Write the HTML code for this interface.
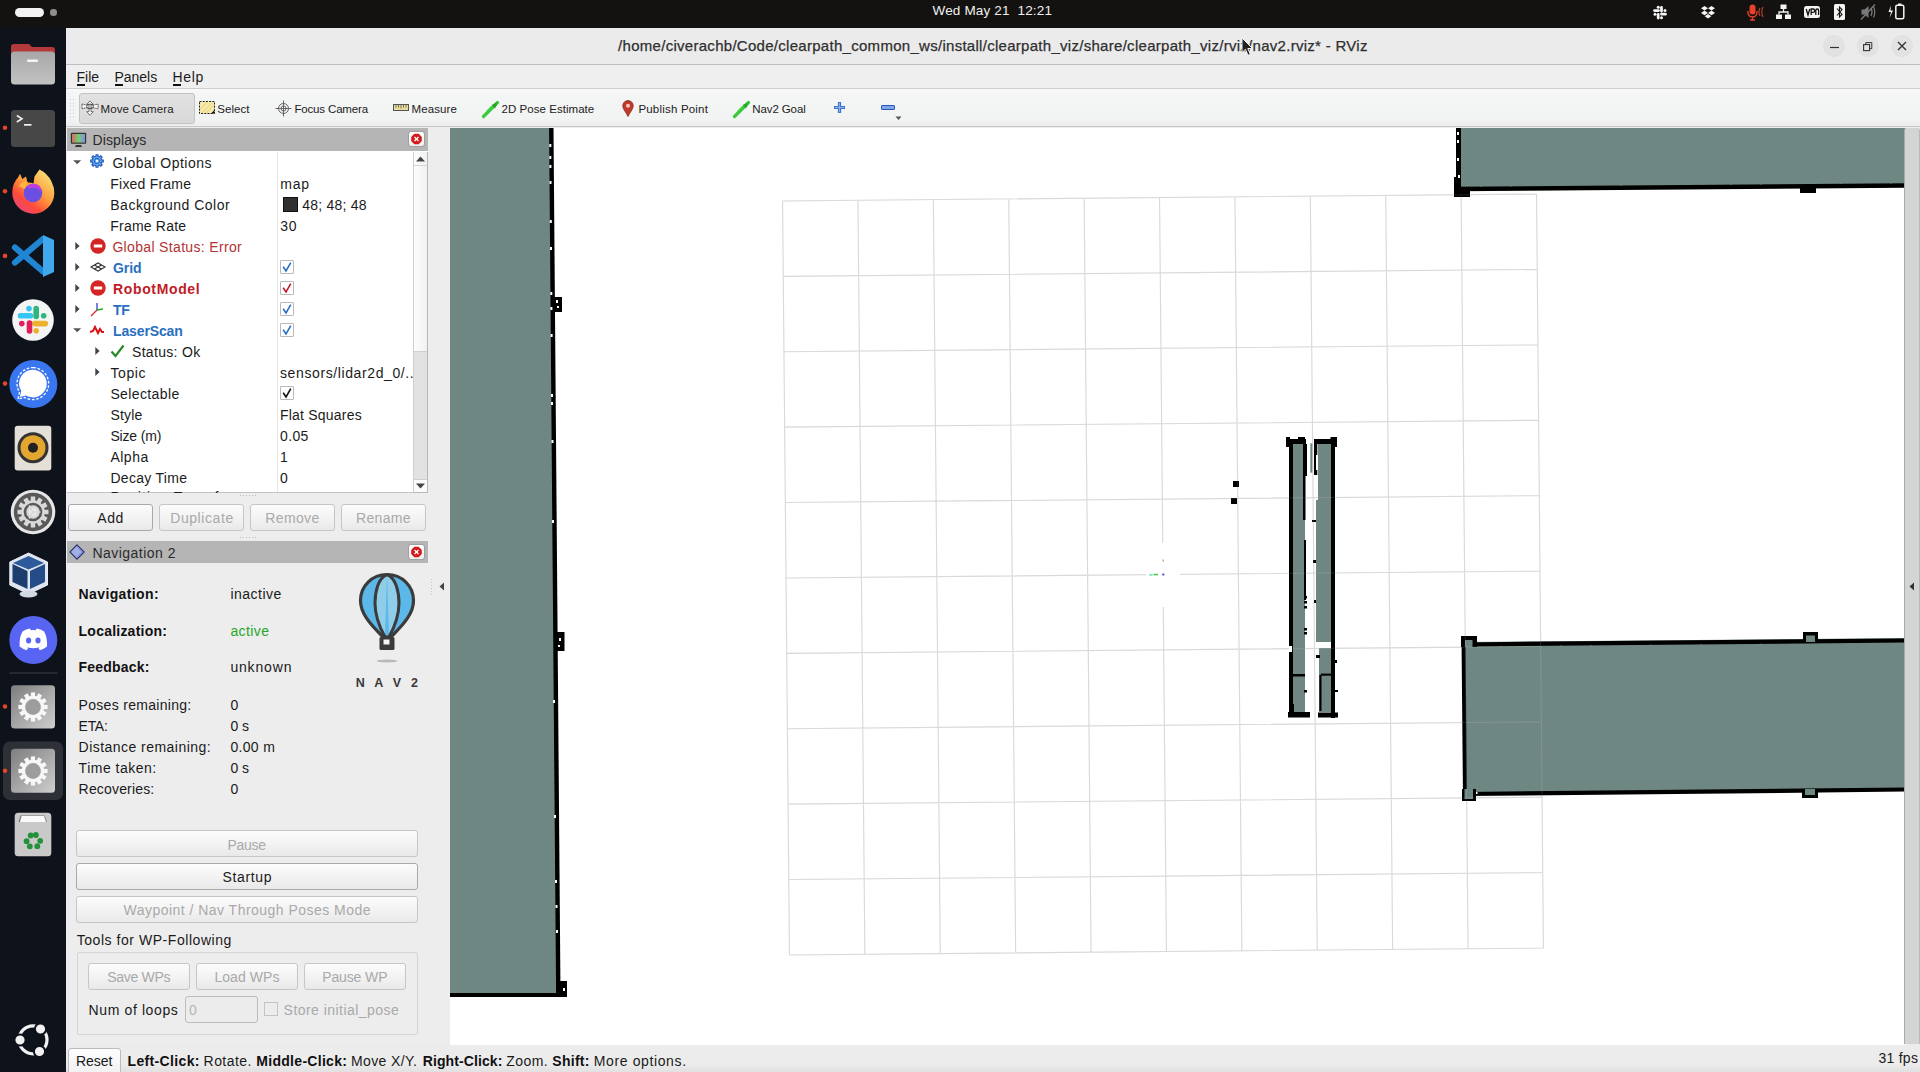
<!DOCTYPE html><html><head><meta charset="utf-8"><style>
html,body{margin:0;padding:0;}
body{width:1920px;height:1072px;overflow:hidden;position:relative;background:#ededed;font-family:"Liberation Sans",sans-serif;}
.t{position:absolute;white-space:pre;}
.b{position:absolute;box-sizing:border-box;}
svg{position:absolute;overflow:visible;}
</style></head><body>
<div class="b" style="left:0px;top:0px;width:1920px;height:28px;background:#131210;"></div>
<div class="b" style="left:15px;top:8px;width:29px;height:8.5px;background:#f2f2f2;border-radius:4.5px;"></div>
<div class="b" style="left:50px;top:9px;width:6.5px;height:6.5px;background:#8e8e8e;border-radius:50%;"></div>
<div class="t" style="left:932.50px;top:3.37px;font-size:13.5px;line-height:15.51px;color:#f0f0f0;letter-spacing:0.164px;">Wed May 21  12:21</div>
<div class="b" style="left:0px;top:28px;width:66px;height:1044px;background:#0e121b;"></div>
<div class="b" style="left:66px;top:28px;width:1854px;height:36px;background:#ebebeb;"></div>
<div class="b" style="left:66px;top:64px;width:1854px;height:1px;background:#bfbfbf;"></div>
<div class="b" style="left:66px;top:65px;width:1854px;height:24px;background:#efefef;"></div>
<div class="b" style="left:66px;top:88px;width:1854px;height:1px;background:#cdcdcd;"></div>
<div class="b" style="left:66px;top:89px;width:1854px;height:38px;background:linear-gradient(#f9f9f9 0px,#f4f5f5 6px,#f2f3f3 30px,#ececec 37px);"></div>
<div class="b" style="left:66px;top:126px;width:1854px;height:1px;background:#c8c8c8;"></div>
<div class="t" style="left:618.10px;top:36.78px;font-size:15px;line-height:17.23px;color:#2f2f2f;letter-spacing:0.284px;-webkit-text-stroke:0.25px #2f2f2f;">/home/civerachb/Code/clearpath_common_ws/install/clearpath_viz/share/clearpath_viz/rviz/nav2.rviz* - RViz</div>
<div class="b" style="left:1823px;top:35px;width:22px;height:22px;background:#e2e2e2;border-radius:50%;"></div>
<div class="b" style="left:1856.5px;top:35px;width:22px;height:22px;background:#e2e2e2;border-radius:50%;"></div>
<div class="b" style="left:1891px;top:35px;width:22px;height:22px;background:#e2e2e2;border-radius:50%;"></div>
<div class="t" style="left:76.60px;top:69.11px;font-size:14px;line-height:16.09px;color:#1b1b1b;letter-spacing:-0.049px;">File</div>
<div class="t" style="left:114.40px;top:69.11px;font-size:14px;line-height:16.09px;color:#1b1b1b;letter-spacing:0.001px;">Panels</div>
<div class="t" style="left:172.50px;top:69.11px;font-size:14px;line-height:16.09px;color:#1b1b1b;letter-spacing:0.673px;">Help</div>
<div class="b" style="left:77px;top:84px;width:7.5px;height:2px;background:#111;"></div>
<div class="b" style="left:114.5px;top:84px;width:8.5px;height:2px;background:#111;"></div>
<div class="b" style="left:172.5px;top:84px;width:8.5px;height:2px;background:#111;"></div>
<div class="b" style="left:66px;top:127px;width:384px;height:917px;background:#ededed;"></div>
<div class="b" style="left:67px;top:128px;width:361px;height:23px;background:#b5b5b5;"></div>
<div class="t" style="left:92.50px;top:132.11px;font-size:14px;line-height:16.09px;color:#2a2a2a;letter-spacing:0.130px;">Displays</div>
<div class="b" style="left:67px;top:151px;width:361px;height:342px;background:#ffffff;border-bottom:1px solid #c4c4c4;"></div>
<div class="b" style="left:277px;top:152px;width:1px;height:340px;background:#e6e6e6;"></div>
<div class="b" style="left:413px;top:152px;width:15px;height:341px;background:#e2e2e2;border-left:1px solid #cfcfcf;border-right:1px solid #b8b8b8;border-bottom:1px solid #b8b8b8;"></div>
<div class="b" style="left:414px;top:152px;width:13px;height:200px;background:linear-gradient(90deg,#fdfdfd,#f1f1f1);border-bottom:1px solid #d0d0d0;"></div>
<div class="b" style="left:414px;top:165px;width:13px;height:1px;background:#d6d6d6;"></div>
<div class="b" style="left:414px;top:479px;width:13px;height:1px;background:#d0d0d0;"></div>
<div class="b" style="left:414px;top:480px;width:13px;height:12px;background:#fbfbfb;"></div>
<svg style="left:73px;top:159.5px" width="10" height="6"><path d="M0.2 0.3 L8.2 0.3 L4.2 4.3 Z" fill="#555"/></svg>
<svg style="left:90.4px;top:154.4px" width="14" height="14"><path d="M11.56 5.86 L13.32 6.00 L13.32 8.00 L11.56 8.14 L11.03 9.42 L12.18 10.76 L10.76 12.18 L9.42 11.03 L8.14 11.56 L8.00 13.32 L6.00 13.32 L5.86 11.56 L4.58 11.03 L3.24 12.18 L1.82 10.76 L2.97 9.42 L2.44 8.14 L0.68 8.00 L0.68 6.00 L2.44 5.86 L2.97 4.58 L1.82 3.24 L3.24 1.82 L4.58 2.97 L5.86 2.44 L6.00 0.68 L8.00 0.68 L8.14 2.44 L9.42 2.97 L10.76 1.82 L12.18 3.24 L11.03 4.58 Z" fill="#5fa8e6" stroke="#2458c0" stroke-width="1.1"/><circle cx="7" cy="7" r="2.6" fill="none" stroke="#2458c0" stroke-width="0.9"/><circle cx="7" cy="7" r="1.3" fill="#e8f4ff"/></svg>
<div class="t" style="left:112.40px;top:155.01px;font-size:14px;line-height:16.09px;color:#1b1b1b;letter-spacing:0.502px;">Global Options</div>
<div class="t" style="left:110.30px;top:176.01px;font-size:14px;line-height:16.09px;color:#1b1b1b;letter-spacing:0.217px;">Fixed Frame</div>
<div class="t" style="left:280.30px;top:176.01px;font-size:14px;line-height:16.09px;color:#1b1b1b;letter-spacing:0.741px;">map</div>
<div class="t" style="left:110.30px;top:197.01px;font-size:14px;line-height:16.09px;color:#1b1b1b;letter-spacing:0.486px;">Background Color</div>
<div class="b" style="left:283px;top:197px;width:15px;height:15px;background:#303030;border:1px solid #111;"></div>
<div class="t" style="left:302.30px;top:197.01px;font-size:14px;line-height:16.09px;color:#1b1b1b;letter-spacing:0.206px;">48; 48; 48</div>
<div class="t" style="left:110.30px;top:218.01px;font-size:14px;line-height:16.09px;color:#1b1b1b;letter-spacing:0.203px;">Frame Rate</div>
<div class="t" style="left:280.30px;top:218.01px;font-size:14px;line-height:16.09px;color:#1b1b1b;letter-spacing:0.637px;">30</div>
<svg style="left:75px;top:241px" width="6" height="10"><path d="M0.3 1 L4.6 5 L0.3 9 Z" fill="#444"/></svg>
<svg style="left:89.5px;top:238px" width="16" height="16"><circle cx="8" cy="8" r="7.7" fill="#d42424"/><rect x="3.8" y="6.4" width="8.4" height="3.2" rx="0.4" fill="#fff"/></svg>
<div class="t" style="left:112.40px;top:239.01px;font-size:14px;line-height:16.09px;color:#b43232;letter-spacing:0.337px;">Global Status: Error</div>
<svg style="left:75px;top:262px" width="6" height="10"><path d="M0.3 1 L4.6 5 L0.3 9 Z" fill="#444"/></svg>
<svg style="left:90px;top:261px" width="16" height="12"><g fill="none" stroke="#333" stroke-width="1.1"><path d="M1 6 L8 2 L15 6 L8 10 Z"/><path d="M4.5 4 L11.5 8 M11.5 4 L4.5 8"/></g></svg>
<div class="t" style="left:113.00px;top:260.01px;font-size:14px;line-height:16.09px;color:#2a6fbf;font-weight:bold;letter-spacing:-0.094px;">Grid</div>
<div class="b" style="left:280px;top:260px;width:14px;height:14px;background:#fff;border:1px solid #b9b9b9;border-radius:1px;"></div>
<svg style="left:280px;top:260px" width="14" height="14"><path d="M3.2 6.8 L6 11 L10.8 2.6" stroke="#2a6fbf" stroke-width="1.6" fill="none" stroke-linejoin="miter"/></svg>
<svg style="left:75px;top:283px" width="6" height="10"><path d="M0.3 1 L4.6 5 L0.3 9 Z" fill="#444"/></svg>
<svg style="left:89.5px;top:280px" width="16" height="16"><circle cx="8" cy="8" r="7.7" fill="#d42424"/><rect x="3.8" y="6.4" width="8.4" height="3.2" rx="0.4" fill="#fff"/></svg>
<div class="t" style="left:113.00px;top:281.01px;font-size:14px;line-height:16.09px;color:#c01c28;font-weight:bold;letter-spacing:0.641px;">RobotModel</div>
<div class="b" style="left:280px;top:281px;width:14px;height:14px;background:#fff;border:1px solid #b9b9b9;border-radius:1px;"></div>
<svg style="left:280px;top:281px" width="14" height="14"><path d="M3.2 6.8 L6 11 L10.8 2.6" stroke="#c01c28" stroke-width="1.6" fill="none" stroke-linejoin="miter"/></svg>
<svg style="left:75px;top:304px" width="6" height="10"><path d="M0.3 1 L4.6 5 L0.3 9 Z" fill="#444"/></svg>
<svg style="left:89px;top:301px" width="16" height="16"><path d="M8 9 L8 2" stroke="#2244cc" stroke-width="1.3"/><path d="M8 9 L14 8" stroke="#22aa22" stroke-width="1.3"/><path d="M8 9 L2 15" stroke="#dd2222" stroke-width="1.3"/></svg>
<div class="t" style="left:113.00px;top:302.01px;font-size:14px;line-height:16.09px;color:#2a6fbf;font-weight:bold;letter-spacing:-0.294px;">TF</div>
<div class="b" style="left:280px;top:302px;width:14px;height:14px;background:#fff;border:1px solid #b9b9b9;border-radius:1px;"></div>
<svg style="left:280px;top:302px" width="14" height="14"><path d="M3.2 6.8 L6 11 L10.8 2.6" stroke="#2a6fbf" stroke-width="1.6" fill="none" stroke-linejoin="miter"/></svg>
<svg style="left:73px;top:327.5px" width="10" height="6"><path d="M0.2 0.3 L8.2 0.3 L4.2 4.3 Z" fill="#555"/></svg>
<svg style="left:89px;top:323px" width="16" height="14"><path d="M1 9 L4 8 L6 4 L9 10 L11 6 L13 9 L15 9" stroke="#dd1111" stroke-width="2" fill="none"/></svg>
<div class="t" style="left:113.00px;top:323.01px;font-size:14px;line-height:16.09px;color:#2a6fbf;font-weight:bold;letter-spacing:-0.125px;">LaserScan</div>
<div class="b" style="left:280px;top:323px;width:14px;height:14px;background:#fff;border:1px solid #b9b9b9;border-radius:1px;"></div>
<svg style="left:280px;top:323px" width="14" height="14"><path d="M3.2 6.8 L6 11 L10.8 2.6" stroke="#2a6fbf" stroke-width="1.6" fill="none" stroke-linejoin="miter"/></svg>
<svg style="left:95px;top:346px" width="6" height="10"><path d="M0.3 1 L4.6 5 L0.3 9 Z" fill="#444"/></svg>
<svg style="left:110px;top:344px" width="15" height="14"><path d="M1.5 7.5 L5.5 12 L13.5 1.5" stroke="#2a8a2a" stroke-width="2.2" fill="none"/></svg>
<div class="t" style="left:132.00px;top:344.01px;font-size:14px;line-height:16.09px;color:#1b1b1b;letter-spacing:0.316px;">Status: Ok</div>
<svg style="left:95px;top:367px" width="6" height="10"><path d="M0.3 1 L4.6 5 L0.3 9 Z" fill="#444"/></svg>
<div class="t" style="left:110.40px;top:365.01px;font-size:14px;line-height:16.09px;color:#1b1b1b;letter-spacing:0.632px;">Topic</div>
<div class="t" style="left:280.00px;top:365.01px;font-size:14px;line-height:16.09px;color:#1b1b1b;letter-spacing:0.609px;">sensors/lidar2d_0/..</div>
<div class="t" style="left:110.40px;top:386.01px;font-size:14px;line-height:16.09px;color:#1b1b1b;letter-spacing:0.382px;">Selectable</div>
<div class="b" style="left:280px;top:386px;width:14px;height:14px;background:#fff;border:1px solid #b9b9b9;border-radius:1px;"></div>
<svg style="left:280px;top:386px" width="14" height="14"><path d="M3.2 6.8 L6 11 L10.8 2.6" stroke="#111" stroke-width="1.6" fill="none" stroke-linejoin="miter"/></svg>
<div class="t" style="left:110.40px;top:407.01px;font-size:14px;line-height:16.09px;color:#1b1b1b;letter-spacing:0.194px;">Style</div>
<div class="t" style="left:280.00px;top:407.01px;font-size:14px;line-height:16.09px;color:#1b1b1b;letter-spacing:0.205px;">Flat Squares</div>
<div class="t" style="left:110.40px;top:428.01px;font-size:14px;line-height:16.09px;color:#1b1b1b;letter-spacing:-0.156px;">Size (m)</div>
<div class="t" style="left:280.00px;top:428.01px;font-size:14px;line-height:16.09px;color:#1b1b1b;letter-spacing:0.355px;">0.05</div>
<div class="t" style="left:110.40px;top:449.01px;font-size:14px;line-height:16.09px;color:#1b1b1b;letter-spacing:0.501px;">Alpha</div>
<div class="t" style="left:280.00px;top:449.01px;font-size:14px;line-height:16.09px;color:#1b1b1b;">1</div>
<div class="t" style="left:110.40px;top:470.01px;font-size:14px;line-height:16.09px;color:#1b1b1b;letter-spacing:0.301px;">Decay Time</div>
<div class="t" style="left:280.00px;top:470.01px;font-size:14px;line-height:16.09px;color:#1b1b1b;">0</div>
<div class="b" style="left:67px;top:488px;width:346px;height:5px;overflow:hidden;"><div class="t" style="left:43.40px;top:1.41px;font-size:14px;line-height:16.09px;color:#1b1b1b;letter-spacing:1.100px;">Position Transformer</div>
</div>
<div class="b" style="left:68px;top:504px;width:85px;height:27px;background:linear-gradient(#fcfcfc,#f3f3f3 50%,#e9e9e9);border:1px solid #a9a9a9;border-radius:3px;"></div>
<div class="t" style="left:97.20px;top:509.71px;font-size:14px;line-height:16.09px;color:#1b1b1b;letter-spacing:0.647px;">Add</div>
<div class="b" style="left:159px;top:504px;width:85px;height:27px;background:linear-gradient(#fcfcfc,#f3f3f3 50%,#e9e9e9);border:1px solid #c6c6c6;border-radius:3px;"></div>
<div class="t" style="left:170.20px;top:509.71px;font-size:14px;line-height:16.09px;color:#a9a9a9;letter-spacing:0.582px;">Duplicate</div>
<div class="b" style="left:250px;top:504px;width:85px;height:27px;background:linear-gradient(#fcfcfc,#f3f3f3 50%,#e9e9e9);border:1px solid #c6c6c6;border-radius:3px;"></div>
<div class="t" style="left:265.30px;top:509.71px;font-size:14px;line-height:16.09px;color:#a9a9a9;letter-spacing:0.358px;">Remove</div>
<div class="b" style="left:341px;top:504px;width:85px;height:27px;background:linear-gradient(#fcfcfc,#f3f3f3 50%,#e9e9e9);border:1px solid #c6c6c6;border-radius:3px;"></div>
<div class="t" style="left:356.00px;top:509.71px;font-size:14px;line-height:16.09px;color:#a9a9a9;letter-spacing:0.322px;">Rename</div>
<svg style="left:240px;top:494px" width="20" height="4"><g fill="#bbb"><rect x="0" y="1" width="1" height="1"/><rect x="3" y="1" width="1" height="1"/><rect x="6" y="1" width="1" height="1"/><rect x="9" y="1" width="1" height="1"/><rect x="12" y="1" width="1" height="1"/><rect x="15" y="1" width="1" height="1"/></g></svg>
<svg style="left:240px;top:536px" width="20" height="4"><g fill="#bbb"><rect x="0" y="1" width="1" height="1"/><rect x="3" y="1" width="1" height="1"/><rect x="6" y="1" width="1" height="1"/><rect x="9" y="1" width="1" height="1"/><rect x="12" y="1" width="1" height="1"/><rect x="15" y="1" width="1" height="1"/></g></svg>
<div class="b" style="left:67px;top:541px;width:361px;height:22px;background:#b5b5b5;"></div>
<svg style="left:69.4px;top:544.4px" width="16" height="16"><path d="M8 0.9 L15.1 8 L8 15.1 L0.9 8 Z" fill="#a2aee4" stroke="#26306c" stroke-width="1.1"/><path d="M8 3 L13 8 L8 13" fill="none" stroke="#7f8fe0" stroke-width="1"/></svg>
<div class="t" style="left:92.50px;top:544.61px;font-size:14px;line-height:16.09px;color:#2a2a2a;letter-spacing:0.464px;">Navigation 2</div>
<div class="b" style="left:408px;top:131px;width:17px;height:16px;background:linear-gradient(#ffffff,#eeeeee);border:1px solid #a0a0a0;border-radius:3px;"></div>
<svg style="left:410px;top:133px" width="13" height="12"><path d="M4.3 0.8 L8.7 0.8 L11.8 3.9 L11.8 8.1 L8.7 11.2 L4.3 11.2 L1.2 8.1 L1.2 3.9 Z" fill="#d41a1a"/><path d="M4.5 4 L8.5 8 M8.5 4 L4.5 8" stroke="#fff" stroke-width="1.4"/></svg>
<div class="b" style="left:408px;top:544px;width:17px;height:16px;background:linear-gradient(#ffffff,#eeeeee);border:1px solid #a0a0a0;border-radius:3px;"></div>
<svg style="left:410px;top:546px" width="13" height="12"><path d="M4.3 0.8 L8.7 0.8 L11.8 3.9 L11.8 8.1 L8.7 11.2 L4.3 11.2 L1.2 8.1 L1.2 3.9 Z" fill="#d41a1a"/><path d="M4.5 4 L8.5 8 M8.5 4 L4.5 8" stroke="#fff" stroke-width="1.4"/></svg>
<svg style="left:415px;top:155px" width="11" height="8"><path d="M1 6.5 L5.5 1.5 L10 6.5 Z" fill="#444"/></svg>
<svg style="left:415px;top:482px" width="11" height="8"><path d="M1 1.5 L5.5 6.5 L10 1.5 Z" fill="#444"/></svg>
<div class="t" style="left:78.60px;top:586.11px;font-size:14px;line-height:16.09px;color:#111;font-weight:bold;letter-spacing:0.381px;">Navigation:</div>
<div class="t" style="left:230.40px;top:586.11px;font-size:14px;line-height:16.09px;color:#1a1a1a;letter-spacing:0.507px;">inactive</div>
<div class="t" style="left:78.60px;top:622.71px;font-size:14px;line-height:16.09px;color:#111;font-weight:bold;letter-spacing:0.224px;">Localization:</div>
<div class="t" style="left:230.40px;top:622.71px;font-size:14px;line-height:16.09px;color:#27a62a;letter-spacing:0.408px;">active</div>
<div class="t" style="left:78.60px;top:659.11px;font-size:14px;line-height:16.09px;color:#111;font-weight:bold;letter-spacing:0.200px;">Feedback:</div>
<div class="t" style="left:230.40px;top:659.11px;font-size:14px;line-height:16.09px;color:#1a1a1a;letter-spacing:0.831px;">unknown</div>
<div class="t" style="left:78.60px;top:696.61px;font-size:14px;line-height:16.09px;color:#1a1a1a;letter-spacing:0.298px;">Poses remaining:</div>
<div class="t" style="left:230.40px;top:696.61px;font-size:14px;line-height:16.09px;color:#1a1a1a;">0</div>
<div class="t" style="left:78.60px;top:717.61px;font-size:14px;line-height:16.09px;color:#1a1a1a;letter-spacing:-0.298px;">ETA:</div>
<div class="t" style="left:230.40px;top:717.61px;font-size:14px;line-height:16.09px;color:#1a1a1a;">0 s</div>
<div class="t" style="left:78.60px;top:738.61px;font-size:14px;line-height:16.09px;color:#1a1a1a;letter-spacing:0.463px;">Distance remaining:</div>
<div class="t" style="left:230.40px;top:738.61px;font-size:14px;line-height:16.09px;color:#1a1a1a;letter-spacing:0.324px;">0.00 m</div>
<div class="t" style="left:78.60px;top:759.61px;font-size:14px;line-height:16.09px;color:#1a1a1a;letter-spacing:0.501px;">Time taken:</div>
<div class="t" style="left:230.40px;top:759.61px;font-size:14px;line-height:16.09px;color:#1a1a1a;">0 s</div>
<div class="t" style="left:78.60px;top:780.61px;font-size:14px;line-height:16.09px;color:#1a1a1a;letter-spacing:0.171px;">Recoveries:</div>
<div class="t" style="left:230.40px;top:780.61px;font-size:14px;line-height:16.09px;color:#1a1a1a;">0</div>
<svg style="left:354px;top:570px" width="66" height="96" viewBox="0 0 66 96">
<path d="M33 4.5 C18 4.5 6.5 16 6.5 30.5 C6.5 43 15 53 29 67 L37 67 C51 53 59.5 43 59.5 30.5 C59.5 16 48 4.5 33 4.5 Z" fill="#5bb8e8" stroke="#3b3b3b" stroke-width="3.2"/>
<path d="M33 4.5 C24 8 21 22 21 33 C21 46 26 58 31 67 M33 4.5 C42 8 45 22 45 33 C45 46 40 58 35 67" fill="#8fcde9" stroke="#3b3b3b" stroke-width="3"/>
<rect x="25.5" y="67" width="15" height="13" fill="#3b3b3b" rx="1.5"/>
<rect x="29.5" y="69.5" width="6" height="5" fill="#f2f2f2"/>
<ellipse cx="33" cy="91" rx="10.5" ry="1.4" fill="#b9b9b9"/>
</svg>
<div class="t" style="left:355.70px;top:675.89px;font-size:12.5px;line-height:14.36px;color:#3a3a3a;font-weight:bold;letter-spacing:3.245px;">N A V 2</div>
<svg style="left:439px;top:582px" width="6" height="9"><path d="M5 0.5 L0.5 4.5 L5 8.5 Z" fill="#444"/></svg>
<svg style="left:430px;top:579px" width="3" height="18"><g fill="#c4c4c4"><rect x="1" y="0" width="1" height="1"/><rect x="1" y="3" width="1" height="1"/><rect x="1" y="6" width="1" height="1"/><rect x="1" y="9" width="1" height="1"/><rect x="1" y="12" width="1" height="1"/><rect x="1" y="15" width="1" height="1"/></g></svg>
<div class="b" style="left:76px;top:830px;width:342px;height:27px;background:linear-gradient(#fcfcfc,#f3f3f3 50%,#e9e9e9);border:1px solid #c6c6c6;border-radius:3px;"></div>
<div class="t" style="left:227.40px;top:836.51px;font-size:14px;line-height:16.09px;color:#a9a9a9;letter-spacing:-0.272px;">Pause</div>
<div class="b" style="left:76px;top:863px;width:342px;height:27px;background:linear-gradient(#fcfcfc,#f3f3f3 50%,#e9e9e9);border:1px solid #a9a9a9;border-radius:3px;"></div>
<div class="t" style="left:222.41px;top:869.11px;font-size:14px;line-height:16.09px;color:#1b1b1b;letter-spacing:0.677px;">Startup</div>
<div class="b" style="left:76px;top:896px;width:342px;height:27px;background:linear-gradient(#fcfcfc,#f3f3f3 50%,#e9e9e9);border:1px solid #c6c6c6;border-radius:3px;"></div>
<div class="t" style="left:123.50px;top:902.11px;font-size:14px;line-height:16.09px;color:#a9a9a9;letter-spacing:0.471px;">Waypoint / Nav Through Poses Mode</div>
<div class="t" style="left:76.70px;top:931.81px;font-size:14px;line-height:16.09px;color:#1a1a1a;letter-spacing:0.547px;">Tools for WP-Following</div>
<div class="b" style="left:77px;top:952px;width:341px;height:83px;border:1px solid #d6d6d6;border-radius:2px;"></div>
<div class="b" style="left:88px;top:963px;width:102px;height:27px;background:linear-gradient(#fcfcfc,#f3f3f3 50%,#e9e9e9);border:1px solid #c6c6c6;border-radius:3px;"></div>
<div class="t" style="left:107.20px;top:969.01px;font-size:14px;line-height:16.09px;color:#a9a9a9;letter-spacing:-0.294px;">Save WPs</div>
<div class="b" style="left:196px;top:963px;width:102px;height:27px;background:linear-gradient(#fcfcfc,#f3f3f3 50%,#e9e9e9);border:1px solid #c6c6c6;border-radius:3px;"></div>
<div class="t" style="left:214.40px;top:969.01px;font-size:14px;line-height:16.09px;color:#a9a9a9;letter-spacing:0.060px;">Load WPs</div>
<div class="b" style="left:304px;top:963px;width:102px;height:27px;background:linear-gradient(#fcfcfc,#f3f3f3 50%,#e9e9e9);border:1px solid #c6c6c6;border-radius:3px;"></div>
<div class="t" style="left:322.20px;top:969.01px;font-size:14px;line-height:16.09px;color:#a9a9a9;letter-spacing:-0.120px;">Pause WP</div>
<div class="t" style="left:88.60px;top:1001.61px;font-size:14px;line-height:16.09px;color:#1a1a1a;letter-spacing:0.613px;">Num of loops</div>
<div class="b" style="left:185px;top:996px;width:73px;height:27px;background:#ececec;border:1px solid #bdbdbd;border-radius:3px;"></div>
<div class="t" style="left:189.00px;top:1001.61px;font-size:14px;line-height:16.09px;color:#b5b5b5;">0</div>
<div class="b" style="left:264px;top:1002px;width:14px;height:14px;border:1px solid #c4c4c4;background:#ececec;"></div>
<div class="t" style="left:283.60px;top:1001.61px;font-size:14px;line-height:16.09px;color:#a9a9a9;letter-spacing:0.455px;">Store initial_pose</div>
<div class="b" style="left:66px;top:1044px;width:1854px;height:28px;background:linear-gradient(#ececec 0px,#ececec 20px,#e1e1e1 28px);"></div>
<div class="b" style="left:68px;top:1048px;width:53px;height:30px;background:linear-gradient(#fdfdfd,#f0f0f0);border:1px solid #bcbcbc;border-radius:3px;"></div>
<div class="t" style="left:75.90px;top:1052.71px;font-size:14px;line-height:16.09px;color:#1a1a1a;letter-spacing:0.009px;">Reset</div>
<div class="t" style="left:127.50px;top:1052.81px;font-size:14px;line-height:16.09px;color:#111;font-weight:bold;letter-spacing:0.349px;">Left-Click:</div>
<div class="t" style="left:203.60px;top:1052.81px;font-size:14px;line-height:16.09px;color:#1a1a1a;letter-spacing:0.429px;">Rotate.</div>
<div class="t" style="left:256.30px;top:1052.81px;font-size:14px;line-height:16.09px;color:#111;font-weight:bold;letter-spacing:0.293px;">Middle-Click:</div>
<div class="t" style="left:350.90px;top:1052.81px;font-size:14px;line-height:16.09px;color:#1a1a1a;letter-spacing:0.402px;">Move X/Y.</div>
<div class="t" style="left:422.70px;top:1052.81px;font-size:14px;line-height:16.09px;color:#111;font-weight:bold;letter-spacing:0.099px;">Right-Click:</div>
<div class="t" style="left:506.25px;top:1052.81px;font-size:14px;line-height:16.09px;color:#1a1a1a;letter-spacing:0.448px;">Zoom.</div>
<div class="t" style="left:552.30px;top:1052.81px;font-size:14px;line-height:16.09px;color:#111;font-weight:bold;letter-spacing:0.270px;">Shift:</div>
<div class="t" style="left:593.75px;top:1052.81px;font-size:14px;line-height:16.09px;color:#1a1a1a;letter-spacing:0.622px;">More options.</div>
<div class="t" style="left:1878.50px;top:1049.91px;font-size:14px;line-height:16.09px;color:#1a1a1a;letter-spacing:0.255px;">31 fps</div>
<div class="b" style="left:450px;top:128px;width:1455px;height:916.6px;background:#ffffff;"></div>
<svg style="left:0px;top:0px" width="1920" height="1072"><defs><clipPath id="vc"><rect x="450" y="128" width="1455" height="916.6"/></clipPath></defs><g clip-path="url(#vc)"><g transform="rotate(-0.524 1163.0 574.5)"><path d="M786.00 197.50 L786.00 951.50 M786.00 197.50 L1540.00 197.50 M861.40 197.50 L861.40 951.50 M786.00 272.90 L1540.00 272.90 M936.80 197.50 L936.80 951.50 M786.00 348.30 L1540.00 348.30 M1012.20 197.50 L1012.20 951.50 M786.00 423.70 L1540.00 423.70 M1087.60 197.50 L1087.60 951.50 M786.00 499.10 L1540.00 499.10 M1163.00 197.50 L1163.00 951.50 M786.00 574.50 L1540.00 574.50 M1238.40 197.50 L1238.40 951.50 M786.00 649.90 L1540.00 649.90 M1313.80 197.50 L1313.80 951.50 M786.00 725.30 L1540.00 725.30 M1389.20 197.50 L1389.20 951.50 M786.00 800.70 L1540.00 800.70 M1464.60 197.50 L1464.60 951.50 M786.00 876.10 L1540.00 876.10 M1540.00 197.50 L1540.00 951.50 M786.00 951.50 L1540.00 951.50" stroke="#d5d5d5" stroke-width="1.1" fill="none"/></g><path d="M450 128 L550 128 L557 994 L450 994 Z" fill="#6f8783"/><path d="M551.3 128 L558.3 994" stroke="#000" stroke-width="4.4" fill="none"/><path d="M450 995 L566 995" stroke="#000" stroke-width="4.2" fill="none"/><rect x="553" y="297" width="9" height="15" fill="#000"/><rect x="555" y="632" width="9.5" height="19" fill="#000"/><rect x="556" y="981" width="11" height="16" fill="#000"/><rect x="556" y="300" width="2" height="3" fill="#fff"/><rect x="557" y="306" width="2" height="2" fill="#fff"/><rect x="559" y="638" width="2" height="3" fill="#fff"/><rect x="558" y="645" width="2" height="2" fill="#fff"/><rect x="563" y="988" width="2" height="3" fill="#fff"/><rect x="549.3" y="144" width="2" height="3" fill="#fff"/><rect x="549.3" y="156" width="2" height="3" fill="#fff"/><rect x="549.4" y="165" width="2" height="3" fill="#fff"/><rect x="549.5" y="181" width="2" height="3" fill="#fff"/><rect x="549.8" y="220" width="2" height="3" fill="#fff"/><rect x="550" y="247" width="2" height="3" fill="#fff"/><rect x="550.3" y="292" width="2" height="3" fill="#fff"/><rect x="550.4" y="307" width="2" height="3" fill="#fff"/><rect x="550.6" y="334" width="2" height="3" fill="#fff"/><rect x="551" y="394" width="2" height="3" fill="#fff"/><rect x="551" y="402" width="2" height="3" fill="#fff"/><rect x="551.5" y="440" width="2" height="3" fill="#fff"/><rect x="552" y="520" width="2" height="3" fill="#fff"/><rect x="553" y="700" width="2" height="3" fill="#fff"/><rect x="554" y="815" width="2" height="3" fill="#fff"/><rect x="555" y="880" width="2" height="3" fill="#fff"/><rect x="555.5" y="905" width="2" height="3" fill="#fff"/><rect x="556" y="930" width="2" height="3" fill="#fff"/><path d="M1458 128 L1905 128 L1905 185 L1458 188 Z" fill="#6f8783"/><path d="M1458.5 128 L1458.5 178" stroke="#000" stroke-width="5" fill="none"/><rect x="1454" y="177" width="7" height="20" fill="#000"/><rect x="1454" y="189" width="16" height="8" fill="#000"/><rect x="1457" y="132" width="2" height="3" fill="#fff"/><rect x="1457" y="140" width="2" height="3" fill="#fff"/><rect x="1457" y="158" width="2" height="3" fill="#fff"/><rect x="1458" y="175" width="2" height="3" fill="#fff"/><rect x="1480" y="186.6" width="2" height="2.5" fill="#fff"/><rect x="1510" y="186.4" width="2" height="2.5" fill="#fff"/><rect x="1560" y="186.0" width="2" height="2.5" fill="#fff"/><rect x="1620" y="185.5" width="2" height="2.5" fill="#fff"/><rect x="1700" y="184.9" width="2" height="2.5" fill="#fff"/><rect x="1730" y="184.7" width="2" height="2.5" fill="#fff"/><rect x="1760" y="184.4" width="2" height="2.5" fill="#fff"/><rect x="1840" y="183.8" width="2" height="2.5" fill="#fff"/><rect x="1890" y="183.4" width="2" height="2.5" fill="#fff"/><path d="M1455 189 L1905 185.5" stroke="#000" stroke-width="4.5" fill="none"/><rect x="1800" y="186" width="16" height="7" fill="#000"/><path d="M1463 642 L1905 638 L1905 790 L1465 795 Z" fill="#6f8783"/><path d="M1463 644.5 L1905 640.5 M1905 789.5 L1465 794" stroke="#000" stroke-width="4.2" fill="none"/><path d="M1463.5 637 L1465 800" stroke="#000" stroke-width="4" fill="none"/><rect x="1461" y="636" width="16" height="11" fill="#000"/><rect x="1465" y="640" width="7.5" height="7" fill="#6f8783"/><rect x="1462" y="789" width="14" height="12" fill="#000"/><rect x="1464.5" y="789" width="8.5" height="10" fill="#6f8783"/><rect x="1476" y="792" width="1.5" height="2" fill="#fff"/><rect x="1803" y="632" width="15" height="10" fill="#000"/><rect x="1806" y="635.5" width="9" height="6.5" fill="#6f8783"/><rect x="1802" y="789" width="16" height="9" fill="#000"/><rect x="1805" y="789" width="10" height="6" fill="#6f8783"/><rect x="1500" y="646.2" width="2" height="2" fill="#6f8783"/><rect x="1530" y="645.9" width="2" height="2" fill="#6f8783"/><rect x="1560" y="645.6" width="2" height="2" fill="#6f8783"/><rect x="1590" y="645.4" width="2" height="2" fill="#6f8783"/><rect x="1650" y="644.8" width="2" height="2" fill="#6f8783"/><rect x="1700" y="644.4" width="2" height="2" fill="#6f8783"/><rect x="1760" y="643.8" width="2" height="2" fill="#6f8783"/><rect x="1850" y="643.0" width="2" height="2" fill="#6f8783"/><rect x="1289" y="444" width="4" height="268" fill="#000"/><rect x="1293" y="444" width="12" height="268" fill="#6f8783"/><rect x="1286" y="439" width="20" height="5" fill="#000"/><rect x="1286" y="437" width="4" height="10" fill="#000"/><rect x="1298" y="437" width="7" height="6" fill="#000"/><rect x="1303" y="444" width="4" height="32" fill="#000"/><rect x="1303" y="476" width="2.5" height="44" fill="#000"/><rect x="1304" y="596" width="3" height="2.5" fill="#000"/><rect x="1304" y="601" width="3" height="2.5" fill="#000"/><rect x="1304" y="606" width="3" height="2.5" fill="#000"/><rect x="1304" y="628" width="3" height="2.5" fill="#000"/><rect x="1304" y="632" width="3" height="2.5" fill="#000"/><rect x="1304" y="690" width="3" height="2.5" fill="#000"/><rect x="1304" y="540" width="2" height="60" fill="#000"/><rect x="1293" y="674" width="12" height="2.5" fill="#000"/><rect x="1288" y="712" width="22" height="5.5" fill="#000"/><rect x="1289" y="646" width="3" height="6" fill="#fff"/><rect x="1291" y="704" width="3" height="12" fill="#000"/><rect x="1310.3" y="443.3" width="2.1000000000001364" height="29.399999999999977" fill="#6f8783"/><rect x="1314" y="439" width="23" height="5" fill="#000"/><rect x="1330.5" y="437" width="6.5" height="10" fill="#000"/><rect x="1314" y="444" width="3.2999999999999545" height="31" fill="#000"/><rect x="1316" y="455" width="2" height="15" fill="#fff"/><rect x="1318" y="444" width="13" height="198" fill="#6f8783"/><rect x="1316" y="500" width="2" height="142" fill="#6f8783"/><rect x="1331" y="444" width="4" height="274" fill="#000"/><rect x="1312" y="520" width="4" height="2" fill="#000"/><rect x="1313" y="560" width="3" height="3" fill="#000"/><rect x="1314" y="600" width="2" height="3" fill="#000"/><rect x="1318" y="642" width="13" height="6" fill="#fff"/><rect x="1319" y="648" width="12" height="64" fill="#6f8783"/><rect x="1319.4" y="675" width="2.099999999999909" height="36" fill="#000"/><rect x="1320.8" y="673.6" width="12.5" height="2.1000000000000227" fill="#000"/><rect x="1318" y="712.5" width="20" height="5.0" fill="#000"/><rect x="1316" y="655" width="4" height="3" fill="#000"/><rect x="1335" y="660" width="2" height="3" fill="#000"/><rect x="1335" y="690" width="3" height="2" fill="#000"/><rect x="1233" y="481" width="6" height="6" fill="#000"/><rect x="1231" y="498" width="6" height="6" fill="#000"/><rect x="1159.5" y="543" width="7.0" height="64" fill="#fff"/><rect x="1146" y="571" width="34" height="7" fill="#fff"/><rect x="1149" y="574" width="3" height="1.5" fill="#9fe0a0"/><rect x="1150.5" y="574" width="2.0" height="1.5" fill="#44e8c0"/><rect x="1153.5" y="573.8" width="4.5" height="1.5" fill="#22cc33"/><rect x="1162.3" y="573.6" width="2.0" height="1.7999999999999545" fill="#2a2ab0"/><rect x="1162.5" y="559.5" width="1.5" height="2.0" fill="#d89a70"/><g transform="rotate(-0.524 1163.0 574.5)"><path d="M786.00 197.50 L786.00 951.50 M786.00 197.50 L1540.00 197.50 M861.40 197.50 L861.40 951.50 M786.00 272.90 L1540.00 272.90 M936.80 197.50 L936.80 951.50 M786.00 348.30 L1540.00 348.30 M1012.20 197.50 L1012.20 951.50 M786.00 423.70 L1540.00 423.70 M1087.60 197.50 L1087.60 951.50 M786.00 499.10 L1540.00 499.10 M1163.00 197.50 L1163.00 951.50 M786.00 574.50 L1540.00 574.50 M1238.40 197.50 L1238.40 951.50 M786.00 649.90 L1540.00 649.90 M1313.80 197.50 L1313.80 951.50 M786.00 725.30 L1540.00 725.30 M1389.20 197.50 L1389.20 951.50 M786.00 800.70 L1540.00 800.70 M1464.60 197.50 L1464.60 951.50 M786.00 876.10 L1540.00 876.10 M1540.00 197.50 L1540.00 951.50 M786.00 951.50 L1540.00 951.50" stroke="rgba(255,255,255,0.12)" stroke-width="1" fill="none"/></g></g></svg>
<div class="b" style="left:1904px;top:128px;width:16px;height:916px;background:#d3d5d5;border-left:1px solid #a9a9a9;border-right:1px solid #b9b9b9;border-top-left-radius:3px;border-top-right-radius:3px;"></div>
<svg style="left:1909px;top:582px" width="6" height="9"><path d="M5 0.5 L0.5 4.5 L5 8.5 Z" fill="#333"/></svg>
<svg style="left:70px;top:99px" width="6" height="20"><g fill="#c8c8c8"><rect x="0" y="0.0" width="1" height="1"/><rect x="3" y="0.0" width="1" height="1"/><rect x="0" y="3.5" width="1" height="1"/><rect x="3" y="3.5" width="1" height="1"/><rect x="0" y="7.0" width="1" height="1"/><rect x="3" y="7.0" width="1" height="1"/><rect x="0" y="10.5" width="1" height="1"/><rect x="3" y="10.5" width="1" height="1"/><rect x="0" y="14.0" width="1" height="1"/><rect x="3" y="14.0" width="1" height="1"/><rect x="0" y="17.5" width="1" height="1"/><rect x="3" y="17.5" width="1" height="1"/></g></svg>
<div class="b" style="left:79px;top:93px;width:116px;height:31px;background:linear-gradient(#e2e2e2,#d9d9d9);border:1px solid #c2c2c2;border-radius:3px;"></div>
<svg style="left:81px;top:100px" width="18" height="17" viewBox="0 0 18 17"><g stroke="#3a3a3a" stroke-width="0.9" stroke-linejoin="round">
<path d="M1 4 L5 5 L13 5 L17 4 L17 8.8 L13 7.8 L5 7.8 L1 8.8 Z" fill="#fafafa" stroke-dasharray="1.2 0.6"/>
<path d="M9 0.9 L12.3 4.3 L10 4.3 L10 11.6 L12.3 11.6 L9 15.4 L5.7 11.6 L8 11.6 L8 4.3 L5.7 4.3 Z" fill="#f4f4f4" stroke="#666"/>
<ellipse cx="9" cy="6.4" rx="3.4" ry="2.3" fill="none" stroke="#444"/></g></svg>
<div class="t" style="left:100.50px;top:103.21px;font-size:11.5px;line-height:13.21px;color:#222;letter-spacing:0.081px;">Move Camera</div>
<svg style="left:199px;top:101px" width="16" height="13"><rect x="0.5" y="0.5" width="15" height="12" fill="#f5e9a8" stroke="#222" stroke-width="1" stroke-dasharray="2 1.2"/><path d="M3 12 L13 2 M7 12 L15 4 M1 8 L8 1" stroke="#e8d27a" stroke-width="1"/><path d="M12 12.5 L15.5 12.5 L15.5 9 Z" fill="#111"/></svg>
<div class="t" style="left:217.30px;top:103.21px;font-size:11.5px;line-height:13.21px;color:#222;letter-spacing:0.029px;">Select</div>
<svg style="left:275px;top:100px" width="17" height="17" viewBox="0 0 17 17"><g fill="none" stroke="#666" stroke-width="1"><circle cx="8.5" cy="8.5" r="5"/><circle cx="8.5" cy="8.5" r="2.5"/><path d="M8.5 0.5 L8.5 16.5 M0.5 8.5 L16.5 8.5"/></g></svg>
<div class="t" style="left:294.40px;top:103.21px;font-size:11.5px;line-height:13.21px;color:#222;letter-spacing:-0.154px;">Focus Camera</div>
<svg style="left:393px;top:104px" width="16" height="8"><rect x="0.5" y="0.5" width="15" height="6" fill="#e9dc9a" stroke="#555" stroke-width="1"/><path d="M3 1 L3 3.5 M5.5 1 L5.5 3.5 M8 1 L8 4.5 M10.5 1 L10.5 3.5 M13 1 L13 3.5" stroke="#555" stroke-width="0.8"/></svg>
<div class="t" style="left:411.60px;top:103.21px;font-size:11.5px;line-height:13.21px;color:#222;letter-spacing:0.097px;">Measure</div>
<svg style="left:482px;top:101px" width="17" height="17"><path d="M1.5 15.5 L15.5 1.5" stroke="#3cc93c" stroke-width="3.2" stroke-linecap="round"/><path d="M15.8 1.2 L9.5 4 L13 7.5 Z" fill="#2aa52a"/><path d="M4 10 L9 5" stroke="#8ee88e" stroke-width="1"/></svg>
<div class="t" style="left:501.60px;top:103.21px;font-size:11.5px;line-height:13.21px;color:#222;letter-spacing:0.040px;">2D Pose Estimate</div>
<svg style="left:622px;top:100px" width="12" height="17" viewBox="0 0 12 17"><path d="M6 16.5 C4 12 0.8 9.5 0.8 5.8 C0.8 2.8 3.2 0.6 6 0.6 C8.8 0.6 11.2 2.8 11.2 5.8 C11.2 9.5 8 12 6 16.5 Z" fill="#c0392b" stroke="#8a2a20" stroke-width="0.8"/><circle cx="6" cy="5.8" r="2" fill="#f4c9c0"/></svg>
<div class="t" style="left:638.40px;top:103.21px;font-size:11.5px;line-height:13.21px;color:#222;letter-spacing:0.199px;">Publish Point</div>
<svg style="left:733px;top:101px" width="17" height="17"><path d="M1.5 15.5 L15.5 1.5" stroke="#3cc93c" stroke-width="3.2" stroke-linecap="round"/><path d="M15.8 1.2 L9.5 4 L13 7.5 Z" fill="#2aa52a"/><path d="M4 10 L9 5" stroke="#8ee88e" stroke-width="1"/></svg>
<div class="t" style="left:752.30px;top:103.21px;font-size:11.5px;line-height:13.21px;color:#222;letter-spacing:-0.114px;">Nav2 Goal</div>
<svg style="left:833px;top:101px" width="13" height="13"><path d="M6.5 1 L6.5 12 M1 6.5 L12 6.5" stroke="#3b73c8" stroke-width="3.2"/><path d="M6.5 1.8 L6.5 11.2 M1.8 6.5 L11.2 6.5" stroke="#8fb6ee" stroke-width="1"/></svg>
<svg style="left:881px;top:105px" width="14" height="5"><rect x="0.5" y="0.5" width="13" height="4" fill="#7fa8ea" stroke="#2a55b0" stroke-width="1" rx="0.6"/></svg>
<svg style="left:895px;top:116px" width="7" height="5"><path d="M0.5 0.5 L6.5 0.5 L3.5 4 Z" fill="#555"/></svg>
<svg style="left:70px;top:132px" width="17" height="16" viewBox="0 0 17 16"><rect x="0.8" y="0.8" width="15.4" height="11" fill="#333" rx="1"/><rect x="2" y="2" width="13" height="8.6" fill="url(#mg)"/><path d="M6 13 L11 13 L12 15 L5 15 Z" fill="#333"/><defs><linearGradient id="mg" x1="0" x2="1"><stop offset="0" stop-color="#d86a6a"/><stop offset="0.5" stop-color="#6fd06f"/><stop offset="1" stop-color="#8a8ae6"/></linearGradient></defs></svg>
<svg style="left:1829px;top:45px" width="12" height="4"><path d="M1 2.5 L10 2.5" stroke="#333" stroke-width="1.2"/></svg>
<svg style="left:1863px;top:42px" width="10" height="10"><rect x="0.6" y="2.6" width="6" height="6" fill="none" stroke="#333" stroke-width="1.1"/><path d="M2.8 2.6 L2.8 0.6 L8.8 0.6 L8.8 6.6 L6.6 6.6" fill="none" stroke="#333" stroke-width="1"/></svg>
<svg style="left:1897px;top:41px" width="10" height="10"><path d="M1 1 L9 9 M9 1 L1 9" stroke="#333" stroke-width="1.4"/></svg>
<svg style="left:1241px;top:37px" width="13" height="20" viewBox="0 0 13 20"><path d="M1 1 L1 15.5 L4.5 12.3 L7 18.3 L9.3 17.3 L6.8 11.5 L11.5 11.5 Z" fill="#222" stroke="#f2f2f2" stroke-width="1"/></svg>
<svg style="left:0px;top:0px" width="66" height="1072"><defs><linearGradient id="fg" x1="0" y1="0" x2="0" y2="1"><stop offset="0" stop-color="#a8a8a8"/><stop offset="1" stop-color="#c2c2c2"/></linearGradient><linearGradient id="gg" x1="0" y1="0" x2="1" y2="1"><stop offset="0" stop-color="#7d7d7d"/><stop offset="1" stop-color="#cfcfcf"/></linearGradient><linearGradient id="ffx" x1="0" y1="0" x2="0" y2="1"><stop offset="0" stop-color="#ffcf3a"/><stop offset="0.5" stop-color="#ff6a2a"/><stop offset="1" stop-color="#e2337a"/></linearGradient></defs><path d="M11 47 Q11 44 14 44 L29 44 L32 47 L52 47 Q55 47 55 50 L55 56 L11 56 Z" fill="#b23a3a"/><rect x="11" y="51.5" width="44" height="33" rx="3.5" fill="url(#fg)"/><rect x="27" y="59.5" width="11" height="2.4" rx="1" fill="#f4f4f4"/><circle cx="5" cy="127.8" r="2.3" fill="#e0462a"/><rect x="11" y="110" width="44" height="37" rx="3.5" fill="#474747"/><path d="M16.8 115.5 L22 118.8 L16.8 122" stroke="#f0f0f0" stroke-width="1.6" fill="none"/><rect x="24" y="124" width="7.5" height="1.7" fill="#f0f0f0"/><circle cx="5" cy="191.3" r="2.3" fill="#e0462a"/><defs><linearGradient id="ffb" x1="0.85" y1="0.1" x2="0.2" y2="0.95"><stop offset="0" stop-color="#f8dc72"/><stop offset="0.45" stop-color="#ff9a3a"/><stop offset="0.75" stop-color="#ff4a3a"/><stop offset="1" stop-color="#e8467a"/></linearGradient></defs><path d="M12.3 192 Q12.6 183 18 177.5 L20 173.8 L22.3 179 L26 176.5 L27.5 182.5 Q30.5 182 33.5 183.5 L34.5 176.5 L39.5 169.6 Q47.5 173.5 51.5 181.5 Q54.6 187.5 54.3 193.5 A21 21 0 0 1 12.3 192 Z" fill="url(#ffb)"/><path d="M18.5 186 Q22 181 28 182 Q25 186 27 190 Z" fill="#ffb43c"/><circle cx="33" cy="193" r="9.3" fill="#6a4fe0"/><path d="M27.5 186.5 Q33 181.5 39.5 186 Q41.5 189 41.5 192 Q37 186 29 188.5 Z" fill="#c13ee6"/><circle cx="5" cy="255.9" r="2.3" fill="#e0462a"/><path d="M15 247.5 L43 271.5" stroke="#2086d4" stroke-width="6.2" stroke-linecap="round"/><path d="M15 262.5 L43 239" stroke="#2086d4" stroke-width="6.2" stroke-linecap="round"/><path d="M43 235 L54 240 L54 272 L43 277 Z" fill="#41a8ec"/><circle cx="33" cy="320" r="20.8" fill="#f4f4f4"/><g stroke-linecap="round" stroke-width="5.6"><path d="M20.5 315.7 L30.5 315.7" stroke="#36c5f0"/><path d="M36.2 308.5 L36.2 316.5" stroke="#2eb67d"/><path d="M35 323.6 L45.3 323.6" stroke="#ecb22e"/><path d="M29.5 323 L29.5 331" stroke="#e01e5a"/></g><circle cx="29" cy="308.6" r="2.8" fill="#36c5f0"/><circle cx="43.7" cy="315.7" r="2.8" fill="#2eb67d"/><circle cx="21.8" cy="323.6" r="2.8" fill="#e01e5a"/><circle cx="36.2" cy="330.8" r="2.8" fill="#ecb22e"/><circle cx="5" cy="383.6" r="2.3" fill="#e0462a"/><circle cx="33.3" cy="384" r="24" fill="#3a76f0"/><path d="M33.4 369.8 A13.8 13.8 0 1 1 26 395.5 L19.8 397 L21.3 391 A13.8 13.8 0 0 1 33.4 369.8 Z" fill="#fff"/><path d="M33.4 367.6 A16 16 0 1 1 24.8 397.5 L18 399 L19.5 392.2 A16 16 0 0 1 33.4 367.6 Z" fill="none" stroke="#fff" stroke-width="1.3" stroke-dasharray="2.6 1.7"/><rect x="14.7" y="425.7" width="36.6" height="44.7" rx="3" fill="#e4e0d8"/><circle cx="33" cy="447.7" r="15.5" fill="#333"/><circle cx="33" cy="447.7" r="12.5" fill="#e3a630"/><circle cx="33" cy="447.7" r="5" fill="#222"/><circle cx="33" cy="512" r="22.3" fill="#e6e6e6"/><circle cx="33" cy="512" r="19.2" fill="#595959"/><rect x="30.8" y="496.5" width="4.4" height="6" fill="#d9d9d9" transform="rotate(0 33 512)"/><rect x="30.8" y="496.5" width="4.4" height="6" fill="#d9d9d9" transform="rotate(30 33 512)"/><rect x="30.8" y="496.5" width="4.4" height="6" fill="#d9d9d9" transform="rotate(60 33 512)"/><rect x="30.8" y="496.5" width="4.4" height="6" fill="#d9d9d9" transform="rotate(90 33 512)"/><rect x="30.8" y="496.5" width="4.4" height="6" fill="#d9d9d9" transform="rotate(120 33 512)"/><rect x="30.8" y="496.5" width="4.4" height="6" fill="#d9d9d9" transform="rotate(150 33 512)"/><rect x="30.8" y="496.5" width="4.4" height="6" fill="#d9d9d9" transform="rotate(180 33 512)"/><rect x="30.8" y="496.5" width="4.4" height="6" fill="#d9d9d9" transform="rotate(210 33 512)"/><rect x="30.8" y="496.5" width="4.4" height="6" fill="#d9d9d9" transform="rotate(240 33 512)"/><rect x="30.8" y="496.5" width="4.4" height="6" fill="#d9d9d9" transform="rotate(270 33 512)"/><rect x="30.8" y="496.5" width="4.4" height="6" fill="#d9d9d9" transform="rotate(300 33 512)"/><rect x="30.8" y="496.5" width="4.4" height="6" fill="#d9d9d9" transform="rotate(330 33 512)"/><circle cx="33" cy="512" r="11.8" fill="#d9d9d9"/><circle cx="33" cy="512" r="8" fill="none" stroke="#595959" stroke-width="2.6"/><circle cx="33" cy="512" r="4.2" fill="#e8e8e8"/><path d="M33 512 L40.5 512 M33 512 L29 505.5 M33 512 L29 518.5" stroke="#d9d9d9" stroke-width="1.6"/><path d="M28.5 553 L47.5 562 L47.5 585 L28.5 594 L9.8 585 L9.8 562 Z" fill="#dfe6f0" stroke="#e8eef5" stroke-width="1"/><path d="M12.5 564 L27.5 571 L27.5 589 L12.5 582 Z" fill="#1c3d6e"/><path d="M30 571 L45 564 L45 582 L30 589 Z" fill="#234c88"/><path d="M28.5 556 L44 563 L28.5 569.5 L13 563 Z" fill="#2c5a9c"/><ellipse cx="28.5" cy="594" rx="9" ry="3.5" fill="#cfd8e3"/><circle cx="33.3" cy="640" r="24" fill="#5865f2"/><path d="M22.5 631.5 Q26 629 30 628.5 L30.8 630.2 Q33.3 629.8 35.8 630.2 L36.6 628.5 Q40.6 629 44.1 631.5 Q47.5 637.5 47 646.5 Q43.5 649.3 39.8 650.3 L38.3 647.8 Q40 647.2 41.5 646.3 Q33.3 650.3 25.1 646.3 Q26.6 647.2 28.3 647.8 L26.8 650.3 Q23.1 649.3 19.6 646.5 Q19.1 637.5 22.5 631.5 Z" fill="#fff"/><ellipse cx="28.6" cy="640.5" rx="2.6" ry="2.9" fill="#5865f2"/><ellipse cx="38" cy="640.5" rx="2.6" ry="2.9" fill="#5865f2"/><rect x="9.5" y="672.5" width="48" height="1" fill="#3b404a"/><circle cx="5" cy="706.5" r="2.3" fill="#e0462a"/><rect x="11" y="685.3" width="44" height="43.2" rx="3.5" fill="url(#gg)"/><rect x="30.9" y="692.4" width="4.2" height="6" fill="#f7f7f7" transform="rotate(0 33 707)"/><rect x="30.9" y="692.4" width="4.2" height="6" fill="#f7f7f7" transform="rotate(30 33 707)"/><rect x="30.9" y="692.4" width="4.2" height="6" fill="#f7f7f7" transform="rotate(60 33 707)"/><rect x="30.9" y="692.4" width="4.2" height="6" fill="#f7f7f7" transform="rotate(90 33 707)"/><rect x="30.9" y="692.4" width="4.2" height="6" fill="#f7f7f7" transform="rotate(120 33 707)"/><rect x="30.9" y="692.4" width="4.2" height="6" fill="#f7f7f7" transform="rotate(150 33 707)"/><rect x="30.9" y="692.4" width="4.2" height="6" fill="#f7f7f7" transform="rotate(180 33 707)"/><rect x="30.9" y="692.4" width="4.2" height="6" fill="#f7f7f7" transform="rotate(210 33 707)"/><rect x="30.9" y="692.4" width="4.2" height="6" fill="#f7f7f7" transform="rotate(240 33 707)"/><rect x="30.9" y="692.4" width="4.2" height="6" fill="#f7f7f7" transform="rotate(270 33 707)"/><rect x="30.9" y="692.4" width="4.2" height="6" fill="#f7f7f7" transform="rotate(300 33 707)"/><rect x="30.9" y="692.4" width="4.2" height="6" fill="#f7f7f7" transform="rotate(330 33 707)"/><circle cx="33" cy="707" r="11.2" fill="#f7f7f7"/><circle cx="33" cy="707" r="7.9" fill="#9d9d9d"/><rect x="3" y="741.5" width="60" height="58.5" rx="7" fill="#2e3037"/><circle cx="5" cy="770.8" r="2.3" fill="#e0462a"/><rect x="11" y="748.8" width="44" height="44" rx="3.5" fill="url(#gg)"/><rect x="30.9" y="756.4" width="4.2" height="6" fill="#f7f7f7" transform="rotate(0 33 771)"/><rect x="30.9" y="756.4" width="4.2" height="6" fill="#f7f7f7" transform="rotate(30 33 771)"/><rect x="30.9" y="756.4" width="4.2" height="6" fill="#f7f7f7" transform="rotate(60 33 771)"/><rect x="30.9" y="756.4" width="4.2" height="6" fill="#f7f7f7" transform="rotate(90 33 771)"/><rect x="30.9" y="756.4" width="4.2" height="6" fill="#f7f7f7" transform="rotate(120 33 771)"/><rect x="30.9" y="756.4" width="4.2" height="6" fill="#f7f7f7" transform="rotate(150 33 771)"/><rect x="30.9" y="756.4" width="4.2" height="6" fill="#f7f7f7" transform="rotate(180 33 771)"/><rect x="30.9" y="756.4" width="4.2" height="6" fill="#f7f7f7" transform="rotate(210 33 771)"/><rect x="30.9" y="756.4" width="4.2" height="6" fill="#f7f7f7" transform="rotate(240 33 771)"/><rect x="30.9" y="756.4" width="4.2" height="6" fill="#f7f7f7" transform="rotate(270 33 771)"/><rect x="30.9" y="756.4" width="4.2" height="6" fill="#f7f7f7" transform="rotate(300 33 771)"/><rect x="30.9" y="756.4" width="4.2" height="6" fill="#f7f7f7" transform="rotate(330 33 771)"/><circle cx="33" cy="771" r="11.2" fill="#f7f7f7"/><circle cx="33" cy="771" r="7.9" fill="#9d9d9d"/><rect x="14.7" y="812.7" width="36.6" height="43.6" rx="3.5" fill="#c9c9c9"/><path d="M18.5 822 L20.5 815.5 L44.5 815.5 L47 822 Z" fill="#7a7a7a"/><path d="M20 822 L21.5 816 L44 816 L46 822 Z" fill="#fafafa"/><circle cx="30.7" cy="835.4" r="2.9" fill="#23913a"/><circle cx="35.9" cy="835" r="2.9" fill="#23913a"/><circle cx="40.2" cy="840.8" r="2.9" fill="#23913a"/><circle cx="37.3" cy="846.2" r="2.9" fill="#23913a"/><circle cx="29.8" cy="846.3" r="2.9" fill="#23913a"/><circle cx="26.6" cy="841.2" r="2.9" fill="#23913a"/><circle cx="33" cy="1039.8" r="14" fill="none" stroke="#f2f2f2" stroke-width="3.2"/><circle cx="40.5" cy="1029" r="5.6" fill="#f2f2f2" stroke="#0e121b" stroke-width="2"/><circle cx="20" cy="1040" r="5.6" fill="#f2f2f2" stroke="#0e121b" stroke-width="2"/><circle cx="39.5" cy="1051.5" r="5.6" fill="#f2f2f2" stroke="#0e121b" stroke-width="2"/></svg>
<svg style="left:0px;top:0px" width="1920" height="28"><g stroke="#f4f4f4" stroke-width="2.8" stroke-linecap="round"><path d="M1654.5 10.6 L1658.5 10.6 M1661.5 7.5 L1661.5 11 M1661.5 14.2 L1665.5 14.2 M1658.2 14.5 L1658.2 18"/></g><g fill="#f4f4f4"><circle cx="1658.2" cy="7.3" r="1.5"/><circle cx="1665" cy="10.6" r="1.5"/><circle cx="1655" cy="14.2" r="1.5"/><circle cx="1661.5" cy="17.8" r="1.5"/></g><g fill="#f4f4f4"><path d="M1704.5 6 L1708 8.3 L1704.5 10.6 L1701 8.3 Z"/><path d="M1711.5 6 L1715 8.3 L1711.5 10.6 L1708 8.3 Z"/><path d="M1704.5 10.6 L1708 12.9 L1704.5 15.2 L1701 12.9 Z"/><path d="M1711.5 10.6 L1715 12.9 L1711.5 15.2 L1708 12.9 Z"/><path d="M1708 14 L1711.3 16.2 L1708 18.4 L1704.7 16.2 Z"/></g><rect x="1749.5" y="4.5" width="6" height="10" rx="3" fill="#e8402a"/><path d="M1747.8 11 Q1747.8 17 1752.5 17 Q1757.2 17 1757.2 11 M1752.5 17 L1752.5 20 M1750 20 L1755 20" stroke="#e8402a" stroke-width="1.3" fill="none"/><path d="M1760 8 Q1758 12 1760 16 M1763 7 Q1760.5 12 1763 17" stroke="#c0442a" stroke-width="1.1" fill="none"/><g fill="#f4f4f4"><rect x="1780.5" y="4.5" width="6" height="4.5"/><rect x="1776" y="14.5" width="6" height="4.5"/><rect x="1785" y="14.5" width="6" height="4.5"/></g><path d="M1783.5 9 L1783.5 12 M1779 14.5 L1779 12 L1788 12 L1788 14.5" stroke="#f4f4f4" stroke-width="1.3" fill="none"/><rect x="1804" y="6" width="16" height="12" rx="2.5" fill="#f4f4f4"/><path d="M1806.2 9 L1808 15 L1809.8 9 M1811.2 15 L1811.2 9 L1813.2 9 Q1814.6 9 1814.6 10.7 Q1814.6 12.4 1813.2 12.4 L1811.2 12.4 M1815.8 15 L1815.8 10.2 Q1815.8 9 1817.2 9 Q1818.6 9 1818.6 10.2 L1818.6 15" stroke="#131210" stroke-width="1.3" fill="none"/><rect x="1834" y="4" width="11" height="16" rx="1.5" fill="#f4f4f4"/><path d="M1837 8.5 L1842 14.5 L1839.5 17 L1839.5 7 L1842 9.5 L1837 15.5" stroke="#131210" stroke-width="1.1" fill="none"/><path d="M1861.5 9.5 L1864.5 9.5 L1868.5 6 L1868.5 18 L1864.5 14.5 L1861.5 14.5 Z" fill="#7a7a7a"/><path d="M1871 8 Q1873 12 1871 16 M1873.5 6.5 Q1876 12 1873.5 17.5" stroke="#7a7a7a" stroke-width="1.2" fill="none"/><path d="M1861 19.5 L1875 4.5" stroke="#7a7a7a" stroke-width="1.4"/><path d="M1891 5.5 L1888.5 12 L1891 12 L1889.5 18 L1893 10.5 L1890.5 10.5 Z" fill="#f4f4f4"/><rect x="1895.8" y="5.3" width="8" height="13.5" rx="1.5" fill="none" stroke="#f4f4f4" stroke-width="1.5"/><rect x="1898" y="3.5" width="3.5" height="2" fill="#f4f4f4"/></svg>
</body></html>
